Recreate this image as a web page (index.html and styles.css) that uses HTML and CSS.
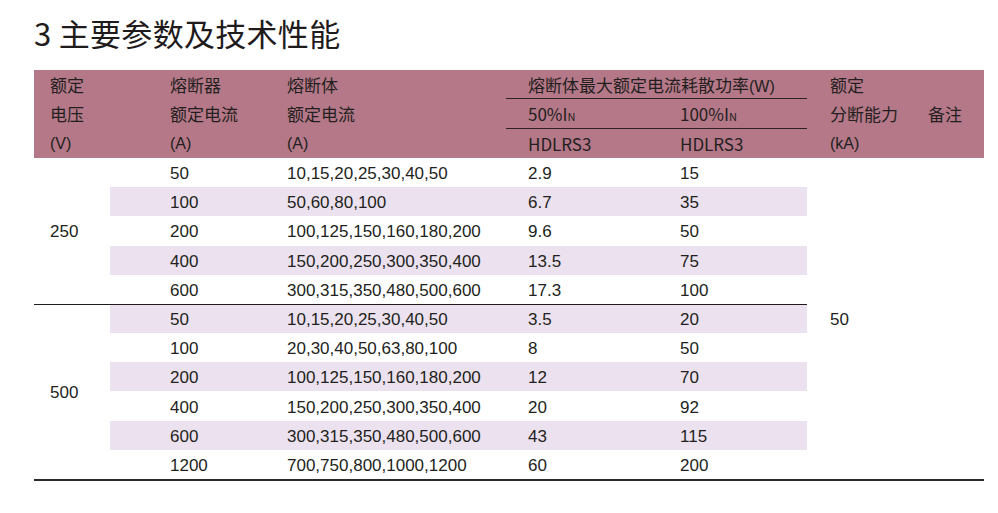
FILE: index.html
```html
<!DOCTYPE html>
<html lang="zh-CN">
<head>
<meta charset="utf-8">
<title>主要参数及技术性能</title>
<link rel="stylesheet" href="styles.css">
</head>
<body>
<div class="page">
  <h1 class="title">3 主要参数及技术性能</h1>
  <div class="table-wrap">
    <table class="spec">
      <colgroup>
        <col class="c1"><col class="c2"><col class="c3"><col class="c4"><col class="c5"><col class="c6"><col class="c7">
      </colgroup>
      <thead>
        <tr class="h">
          <th rowspan="3" class="p1"><div class="ln">额定</div><div class="ln">电压</div><div class="ln lat">(V)</div></th>
          <th rowspan="3" class="p2"><div class="ln">熔断器</div><div class="ln">额定电流</div><div class="ln lat">(A)</div></th>
          <th rowspan="3" class="p3"><div class="ln">熔断体</div><div class="ln">额定电流</div><div class="ln lat">(A)</div></th>
          <th colspan="2" class="p4 rule">熔断体最大额定电流耗散功率<span class="lat">(W)</span></th>
          <th rowspan="3" class="p6"><div class="ln">额定</div><div class="ln">分断能力</div><div class="ln lat">(kA)</div></th>
          <th rowspan="3" class="p7 mid">备注</th>
        </tr>
        <tr class="h">
          <th class="p4 rule lat">50%I<span class="sc">N</span></th>
          <th class="p5 rule lat">100%I<span class="sc">N</span></th>
        </tr>
        <tr class="h">
          <th class="p4 lat">HDLRS3</th>
          <th class="p5 lat">HDLRS3</th>
        </tr>
      </thead>
      <tbody>
        <tr>
          <td rowspan="5" class="p1">250</td>
          <td class="p2">50</td><td class="p3">10,15,20,25,30,40,50</td><td class="p4">2.9</td><td class="p5">15</td>
          <td rowspan="11" class="p6 mid">50</td>
          <td rowspan="11" class="p7"></td>
        </tr>
        <tr class="st"><td class="p2">100</td><td class="p3">50,60,80,100</td><td class="p4">6.7</td><td class="p5">35</td></tr>
        <tr><td class="p2">200</td><td class="p3">100,125,150,160,180,200</td><td class="p4">9.6</td><td class="p5">50</td></tr>
        <tr class="st"><td class="p2">400</td><td class="p3">150,200,250,300,350,400</td><td class="p4">13.5</td><td class="p5">75</td></tr>
        <tr><td class="p2">600</td><td class="p3">300,315,350,480,500,600</td><td class="p4">17.3</td><td class="p5">100</td></tr>
        <tr class="st sep">
          <td rowspan="6" class="p1">500</td>
          <td class="p2">50</td><td class="p3">10,15,20,25,30,40,50</td><td class="p4">3.5</td><td class="p5">20</td>
        </tr>
        <tr><td class="p2">100</td><td class="p3">20,30,40,50,63,80,100</td><td class="p4">8</td><td class="p5">50</td></tr>
        <tr class="st"><td class="p2">200</td><td class="p3">100,125,150,160,180,200</td><td class="p4">12</td><td class="p5">70</td></tr>
        <tr><td class="p2">400</td><td class="p3">150,200,250,300,350,400</td><td class="p4">20</td><td class="p5">92</td></tr>
        <tr class="st"><td class="p2">600</td><td class="p3">300,315,350,480,500,600</td><td class="p4">43</td><td class="p5">115</td></tr>
        <tr><td class="p2">1200</td><td class="p3">700,750,800,1000,1200</td><td class="p4">60</td><td class="p5">200</td></tr>
      </tbody>
    </table>
  </div>
</div>
</body>
</html>
```

FILE: styles.css
```css
html, body {
  margin: 0;
  padding: 0;
  background: #ffffff;
}

body {
  color: #231f20;
  font-family: "Liberation Sans", "Noto Sans CJK SC", sans-serif;
}

.page {
  padding: 13px 14px 0 34px;
}

.title {
  margin: 0 0 17px 0;
  font-family: "Noto Sans CJK SC", sans-serif;
  font-weight: 400;
  font-size: 31px;
  line-height: 40px;
  color: #1f1b1c;
  letter-spacing: 0.3px;
}

.table-wrap {
  width: 950px;
  border-bottom: 2px solid #2a2a2a;
}

.spec {
  width: 950px;
  border-collapse: collapse;
  table-layout: fixed;
}

.c1 { width: 76px; }
.c2 { width: 155px; }
.c3 { width: 241px; }
.c4 { width: 152px; }
.c5 { width: 149px; }
.c6 { width: 99px; }
.c7 { width: 78px; }

.spec th,
.spec td {
  padding: 0;
  text-align: left;
  vertical-align: middle;
  font-weight: 400;
  white-space: nowrap;
}

.spec thead th {
  background: #b57888;
  font-family: "Noto Sans CJK SC", sans-serif;
  font-size: 17px;
  color: #231f20;
}

.spec thead tr.h {
  height: 29.33px;
}

.spec thead th[rowspan] {
  vertical-align: top;
}

.spec thead th.mid {
  vertical-align: middle;
}

.ln {
  height: 29.33px;
  line-height: 29.33px;
}

.lat {
  font-family: "Liberation Sans", sans-serif;
  font-size: 16px;
}

.sc {
  font-size: 11px;
}

.spec thead th.p4.rule,
.spec thead th.p5.rule {
  box-shadow: inset 0 -1px 0 #2a2226;
}

.spec tbody tr {
  height: 29.2px;
}

.spec tbody td {
  font-size: 17px;
  line-height: 20px;
  padding-top: 3px;
}

.p1 { padding-left: 16px !important; }
.p2 { padding-left: 60px !important; }
.p3 { padding-left: 22px !important; }
.p4 { padding-left: 22px !important; }
.p5 { padding-left: 22px !important; }
.p6 { padding-left: 23px !important; }
.p7 { padding-left: 22px !important; }

.spec tr.st td.p2,
.spec tr.st td.p3,
.spec tr.st td.p4,
.spec tr.st td.p5 {
  background: #ece2ef;
}

.spec tr.sep td.p1,
.spec tr.sep td.p2,
.spec tr.sep td.p3,
.spec tr.sep td.p4,
.spec tr.sep td.p5 {
  box-shadow: inset 0 1px 0 #1f1b1c;
}
```
